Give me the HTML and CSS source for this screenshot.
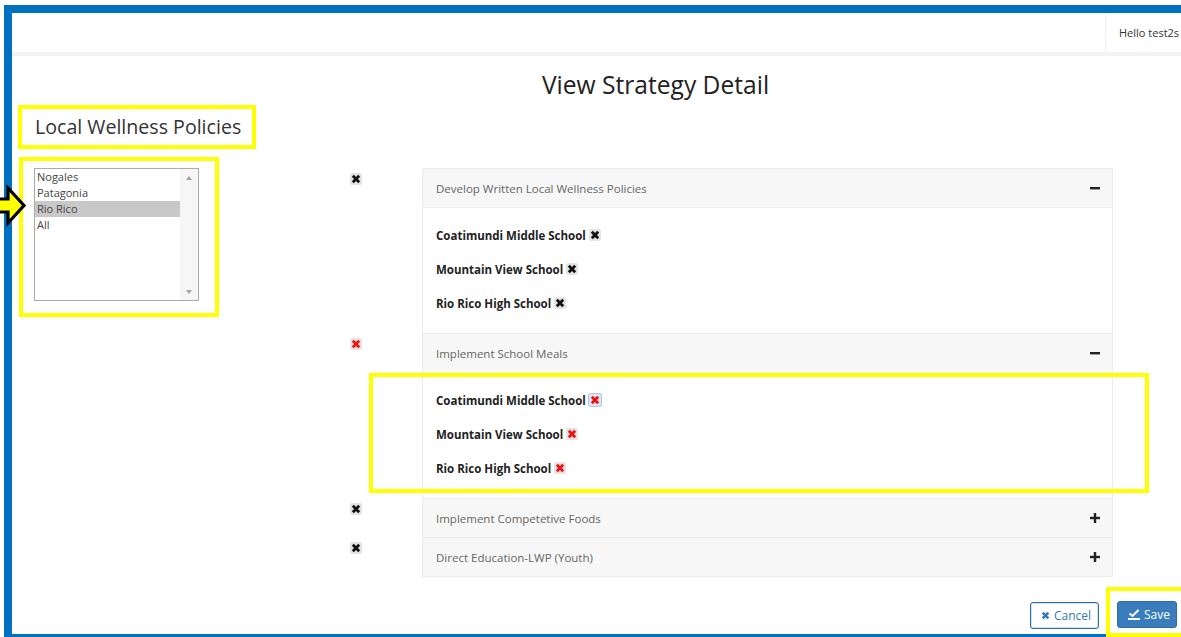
FILE: index.html
```html
<!DOCTYPE html>
<html lang="en">
<head>
<meta charset="utf-8">
<title>View Strategy Detail</title>
<link rel="stylesheet" href="styles.css">
</head>
<body>
<svg class="pointer" width="28" height="42" viewBox="0 0 28 42" aria-hidden="true">
  <polygon points="-6,14 8,14 8,3 24,20.5 8,38 8,27 -6,27" fill="#ffff00" stroke="#000" stroke-width="3.2" stroke-linejoin="miter"/>
</svg>
<div class="frame">
  <header class="topbar">
    <div class="topbar-space"></div>
    <div class="user">Hello test2s</div>
  </header>

  <h1 class="page-title">View Strategy Detail</h1>
  <h2 class="section-title mark">Local Wellness Policies</h2>

  <div class="content">
    <div class="district-pick mark">
      <div class="listbox" role="listbox">
        <ul class="options">
          <li>Nogales</li>
          <li>Patagonia</li>
          <li class="selected">Rio Rico</li>
          <li>All</li>
        </ul>
        <div class="scrollbar"><span class="arrow up"></span><span class="arrow down"></span></div>
      </div>
    </div>

    <div class="strategies">
      <div class="strategy">
        <span class="remove-btn"><svg width="10" height="10" viewBox="0 0 10 10"><path d="M1.8 1.8 L8.2 8.2 M8.2 1.8 L1.8 8.2" stroke="#111" stroke-width="2.8"/></svg></span>
        <div class="panel">
          <div class="panel-head open">
            <span>Develop Written Local Wellness Policies</span>
            <svg width="10" height="10" viewBox="0 0 10 10"><rect x="0" y="4" width="10" height="2.4" fill="#222"/></svg>
          </div>
          <div class="panel-body">
            <div class="school">Coatimundi Middle School <span class="remove-btn"><svg width="10" height="10" viewBox="0 0 10 10"><path d="M1.8 1.8 L8.2 8.2 M8.2 1.8 L1.8 8.2" stroke="#111" stroke-width="2.8"/></svg></span></div>
            <div class="school">Mountain View School <span class="remove-btn"><svg width="10" height="10" viewBox="0 0 10 10"><path d="M1.8 1.8 L8.2 8.2 M8.2 1.8 L1.8 8.2" stroke="#111" stroke-width="2.8"/></svg></span></div>
            <div class="school">Rio Rico High School <span class="remove-btn"><svg width="10" height="10" viewBox="0 0 10 10"><path d="M1.8 1.8 L8.2 8.2 M8.2 1.8 L1.8 8.2" stroke="#111" stroke-width="2.8"/></svg></span></div>
          </div>
        </div>
      </div>

      <div class="strategy">
        <span class="remove-btn"><svg width="10" height="10" viewBox="0 0 10 10"><path d="M1.8 1.8 L8.2 8.2 M8.2 1.8 L1.8 8.2" stroke="#ee1111" stroke-width="2.8"/></svg></span>
        <div class="panel">
          <div class="panel-head open">
            <span>Implement School Meals</span>
            <svg width="10" height="10" viewBox="0 0 10 10"><rect x="0" y="4" width="10" height="2.4" fill="#222"/></svg>
          </div>
          <div class="panel-body marked">
            <div class="school">Coatimundi Middle School <span class="remove-btn focused"><svg width="10" height="10" viewBox="0 0 10 10"><path d="M1.8 1.8 L8.2 8.2 M8.2 1.8 L1.8 8.2" stroke="#ee1111" stroke-width="2.8"/></svg></span></div>
            <div class="school">Mountain View School <span class="remove-btn"><svg width="10" height="10" viewBox="0 0 10 10"><path d="M1.8 1.8 L8.2 8.2 M8.2 1.8 L1.8 8.2" stroke="#ee1111" stroke-width="2.8"/></svg></span></div>
            <div class="school">Rio Rico High School <span class="remove-btn"><svg width="10" height="10" viewBox="0 0 10 10"><path d="M1.8 1.8 L8.2 8.2 M8.2 1.8 L1.8 8.2" stroke="#ee1111" stroke-width="2.8"/></svg></span></div>
          </div>
        </div>
      </div>

      <div class="strategy">
        <span class="remove-btn"><svg width="10" height="10" viewBox="0 0 10 10"><path d="M1.8 1.8 L8.2 8.2 M8.2 1.8 L1.8 8.2" stroke="#111" stroke-width="2.8"/></svg></span>
        <div class="panel">
          <div class="panel-head">
            <span>Implement Competetive Foods</span>
            <svg width="10" height="10" viewBox="0 0 10 10"><rect x="0" y="3.8" width="10" height="2.4" fill="#222"/><rect x="3.8" y="0" width="2.4" height="10" fill="#222"/></svg>
          </div>
        </div>
      </div>

      <div class="strategy">
        <span class="remove-btn"><svg width="10" height="10" viewBox="0 0 10 10"><path d="M1.8 1.8 L8.2 8.2 M8.2 1.8 L1.8 8.2" stroke="#111" stroke-width="2.8"/></svg></span>
        <div class="panel">
          <div class="panel-head">
            <span>Direct Education-LWP (Youth)</span>
            <svg width="10" height="10" viewBox="0 0 10 10"><rect x="0" y="3.8" width="10" height="2.4" fill="#222"/><rect x="3.8" y="0" width="2.4" height="10" fill="#222"/></svg>
          </div>
        </div>
      </div>
    </div>
  </div>

  <div class="actions">
    <button class="btn btn-cancel" type="button">
      <svg width="9" height="9" viewBox="0 0 10 10"><path d="M1.8 1.8 L8.2 8.2 M8.2 1.8 L1.8 8.2" stroke="#337ab7" stroke-width="2.8"/></svg>
      Cancel
    </button>
    <div class="save-wrap mark">
      <button class="btn btn-save" type="button">
        <svg width="12" height="11" viewBox="0 0 12 11"><path d="M1.5 4.5 L4.5 7 L10.5 1" stroke="#fff" stroke-width="2" fill="none"/><rect x="0" y="9" width="12" height="2" fill="#fff"/></svg>
        Save
      </button>
    </div>
  </div>
</div>
</body>
</html>
```

FILE: styles.css
```css
* { box-sizing: border-box; }

html, body {
  margin: 0;
  padding: 0;
  height: 100%;
  overflow: hidden;
  background: #fff;
}

body {
  position: relative;
  font-family: "Open Sans", "Liberation Sans", sans-serif;
  color: #333;
}

/* arrow callout pointing at the district list */
.pointer {
  position: absolute;
  left: 0;
  top: 185px;
  z-index: 5;
}

.frame {
  margin: 5px 0 0 4px;
  border: 8px solid #0070c0;
  border-right: none;
  height: 637px;
}

.mark { border: 4px solid #ffff00; }

/* top bar */
.topbar {
  display: grid;
  grid-template-columns: 1fr 76px;
  height: 43px;
  border-bottom: 4px solid #f3f3f3;
}

.user {
  border-left: 1px solid #f0f0f0;
  padding-left: 13px;
  font-size: 11px;
  line-height: 39px;
  white-space: nowrap;
  color: #333;
}

/* headings */
.page-title {
  margin: 13px 0 0;
  padding-left: 118px;
  text-align: center;
  font-size: 24.6px;
  font-weight: 400;
  line-height: 32px;
  color: #222;
}

.section-title {
  margin: 4px 0 0 6px;
  width: 238px;
  height: 44px;
  padding-left: 13px;
  font-size: 19.6px;
  font-weight: 400;
  line-height: 35px;
  color: #333;
}

/* main row */
.content {
  display: flex;
  align-items: flex-start;
  margin-top: 8px;
}

.district-pick {
  margin-left: 7px;
  width: 200px;
  height: 160px;
  padding: 7px 0 0 11px;
  flex-shrink: 0;
}

.listbox {
  display: flex;
  width: 165px;
  height: 133px;
  border: 1px solid #ababab;
  background: #fff;
}

.options {
  flex: 1;
  list-style: none;
  margin: 0;
  padding: 0;
}

.options li {
  font-size: 11px;
  line-height: 16px;
  padding-left: 2px;
  color: #444;
}

.options li.selected { background: #c8c8c8; }

.scrollbar {
  width: 18px;
  background: #f6f6f6;
  display: flex;
  flex-direction: column;
  justify-content: space-between;
  align-items: center;
  padding: 7px 0 6px;
}

.arrow {
  width: 0;
  height: 0;
  border-left: 3.5px solid transparent;
  border-right: 3.5px solid transparent;
}

.arrow.up { border-bottom: 4px solid #a3a3a3; }
.arrow.down { border-top: 4px solid #a3a3a3; }

/* strategy accordion */
.strategies {
  margin-left: 131px;
  padding-top: 11px;
}

.strategy {
  display: flex;
  align-items: flex-start;
}

.strategy > .remove-btn { margin: 5px 60px 0 0; }

.remove-btn {
  display: inline-flex;
  align-items: center;
  justify-content: center;
  width: 12px;
  height: 12px;
  background: #e4e4e4;
  border-radius: 2px;
  flex-shrink: 0;
}

.remove-btn.focused { box-shadow: 0 0 0 1px #a9c6ee; background: #dfe6f2; }

.panel {
  width: 691px;
  border: 1px solid #ececec;
  border-bottom: none;
}

.strategy:last-child .panel { border-bottom: 1px solid #ececec; }

.panel-head {
  display: flex;
  align-items: center;
  justify-content: space-between;
  height: 38px;
  padding: 0 12px 0 13px;
  background: #f7f7f7;
  font-size: 11.5px;
  color: #666;
}

.panel-head.open {
  height: 39px;
  border-bottom: 1px solid #efefef;
}

.panel-body {
  position: relative;
  height: 125px;
  padding: 10px 12px 0 13px;
  background: #fff;
}

/* highlight frame around the second group of schools */
.panel-body.marked::after {
  content: "";
  position: absolute;
  left: -54px;
  right: -37px;
  top: 0;
  bottom: 5px;
  border: 4px solid #ffff00;
  pointer-events: none;
}

.school {
  display: flex;
  align-items: center;
  gap: 3px;
  height: 34px;
  font-size: 11.5px;
  font-weight: 700;
  color: #222;
}

/* form actions */
.actions {
  display: flex;
  justify-content: flex-end;
  align-items: flex-start;
  gap: 7px;
  margin-top: 10px;
  margin-right: -10px;
}

.btn {
  display: inline-flex;
  align-items: center;
  gap: 4px;
  height: 27px;
  border-radius: 3px;
  font-family: inherit;
  font-size: 12px;
  cursor: pointer;
}

.btn-cancel {
  margin-top: 15px;
  width: 69px;
  padding: 0 0 0 10px;
  background: #fff;
  color: #337ab7;
  border: 1px solid #2e6da4;
  box-shadow: inset 0 0 0 1px #d4e3f2;
}

.save-wrap {
  position: relative;
  z-index: 2;
  height: 50px;
  padding: 10px 10px 0 7px;
}

.btn-save {
  width: 60px;
  padding: 0 0 0 10px;
  background: #3a7dbd;
  color: #fff;
  border: 1px solid #2e6da4;
}
```
